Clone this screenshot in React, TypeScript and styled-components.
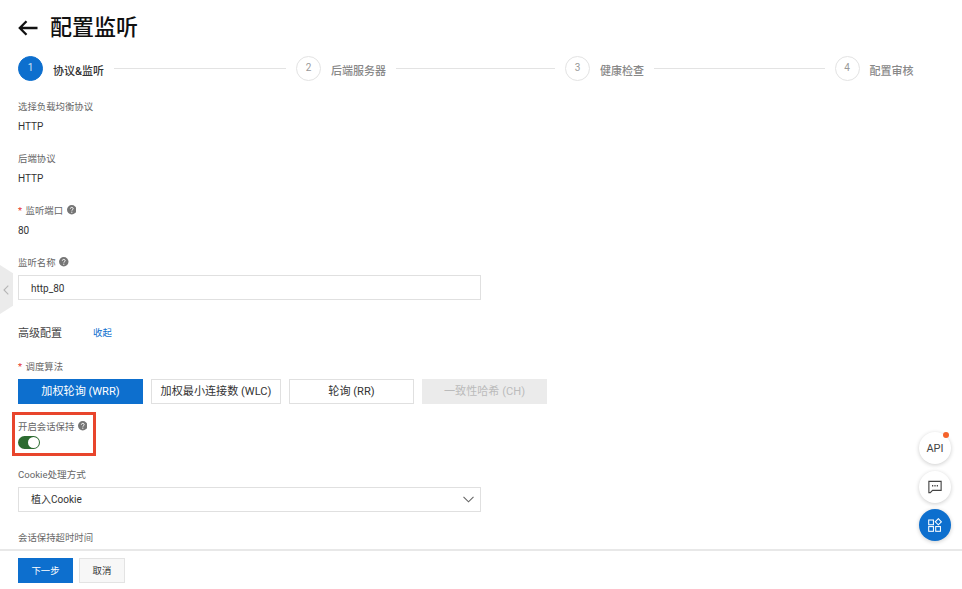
import React, { FC } from 'react';
import styled, { createGlobalStyle } from 'styled-components';

const GlobalStyle = createGlobalStyle`
  html, body {
    margin: 0;
    padding: 0;
    height: 100%;
    overflow: hidden;
    background: #fff;
  }
  body, button, input {
    font-family: Roboto, "Noto Sans CJK SC", sans-serif;
  }
`;

const HelpIcon: FC = () => (
  <HelpSvg viewBox="0 0 16 16">
    <circle cx="8" cy="8" r="8" fill="#757575" />
    <path d="M5.6 6.2C5.7 4.8 6.7 4 8 4c1.400 0 2.400.9 2.400 2.100 0 1-.6 1.500-1.300 2-.6.4-1 .8-1 1.500" fill="none" stroke="#fff" strokeWidth="1.600" />
    <circle cx="8.100" cy="12" r="1" fill="#fff" />
  </HelpSvg>
);

const steps = [
  { n: 1, label: '协议&监听' },
  { n: 2, label: '后端服务器' },
  { n: 3, label: '健康检查' },
  { n: 4, label: '配置审核' },
];

const methods = ['加权轮询 (WRR)', '加权最小连接数 (WLC)', '轮询 (RR)', '一致性哈希 (CH)'];

export default function App() {
  return (
    <Page>
      <GlobalStyle />
      <Main>
        <TitleRow>
          <svg width="20" height="16" viewBox="0 0 20 16" fill="none">
            <path d="M19.500 8H2M8.500 1.200 1.800 8l6.700 6.800" stroke="#111" strokeWidth="2.300" />
          </svg>
          <Title>配置监听</Title>
        </TitleRow>

        <Steps>
          {steps.map((s) => (
            <Step key={s.n}>
              <StepCircle $active={s.n === 1}>{s.n}</StepCircle>
              <StepLabel $active={s.n === 1}>{s.label}</StepLabel>
              {s.n < 4 && <StepLine />}
            </Step>
          ))}
        </Steps>

        <Field>
          <Label>选择负载均衡协议</Label>
          <Value>HTTP</Value>
        </Field>
        <Field>
          <Label>后端协议</Label>
          <Value>HTTP</Value>
        </Field>
        <Field>
          <Label>
            <Required>*</Required>监听端口
            <HelpIcon />
          </Label>
          <Value>80</Value>
        </Field>
        <Label>
          监听名称
          <HelpIcon />
        </Label>
        <TextBox>http_80</TextBox>

        <SectionRow>
          <SectionTitle>高级配置</SectionTitle>
          <Collapse>收起</Collapse>
        </SectionRow>

        <Label>
          <Required>*</Required>调度算法
        </Label>
        <MethodGroup>
          {methods.map((m, i) => (
            <MethodButton key={m} $selected={i === 0} $disabled={i === 3}>
              {m}
            </MethodButton>
          ))}
        </MethodGroup>

        <Highlight>
          <Label>
            开启会话保持
            <HelpIcon />
          </Label>
          <Toggle />
        </Highlight>

        <CookieLabel>Cookie处理方式</CookieLabel>
        <SelectBox>
          植入Cookie
          <svg width="11" height="7" viewBox="0 0 11 7" fill="none">
            <path d="M.5.800 5.500 5.800 10.500.800" stroke="#666" strokeWidth="1.100" />
          </svg>
        </SelectBox>

        <TimeoutLabel>会话保持超时时间</TimeoutLabel>
      </Main>

      <Footer>
        <PrimaryButton>下一步</PrimaryButton>
        <CancelButton>取消</CancelButton>
      </Footer>

      <SideHandle>
        <svg width="6" height="10" viewBox="0 0 6 10" fill="none">
          <path d="M5.300.600 1 5l4.300 4.400" stroke="#b5b5b5" strokeWidth="1.100" />
        </svg>
      </SideHandle>

      <FloatGroup>
        <FloatButton>
          API
          <Dot />
        </FloatButton>
        <FloatButton>
          <svg width="14" height="14" viewBox="0 0 16 16" fill="none">
            <path d="M1 1.500h14v10.300H5.200L2.600 14.400H1z" stroke="#444" strokeWidth="1.300" />
            <path d="M4.600 6.600h1.400M7.300 6.600h1.400M10 6.600h1.400" stroke="#444" strokeWidth="1.800" />
          </svg>
        </FloatButton>
        <FloatButton $primary>
          <svg width="14" height="14" viewBox="0 0 16 16" fill="none" stroke="#fff" strokeWidth="1.200">
            <rect x=".8" y="2.300" width="5.400" height="5.400" />
            <rect x=".8" y="9.800" width="5.400" height="5.400" />
            <rect x="8.800" y="9.800" width="5.400" height="5.400" />
            <path d="M11.800.800 15.300 4.300 11.800 7.800 8.300 4.300z" />
          </svg>
        </FloatButton>
      </FloatGroup>
    </Page>
  );
}

const Page = styled.div`
  position: relative;
  display: flex;
  flex-direction: column;
  height: 100vh;
  overflow: hidden;
  background: #fff;
  color: #333;
`;

const Main = styled.main`
  flex: 1;
  min-height: 0;
  overflow: hidden;
  padding: 0 18px;
`;

const TitleRow = styled.div`
  display: flex;
  align-items: center;
  gap: 12px;
  height: 56px;
`;

const Title = styled.h1`
  margin: 0;
  font-size: 22px;
  font-weight: 500;
  line-height: 28px;
  color: #111;
`;

const Steps = styled.div`
  display: grid;
  grid-template-columns: 278px 269px 269.500px auto;
  height: 25px;
  margin-bottom: 18px;
`;

const Step = styled.div`
  display: flex;
  align-items: flex-start;
`;

const StepCircle = styled.div<{ $active: boolean }>`
  flex: none;
  box-sizing: border-box;
  width: 25px;
  height: 25px;
  border-radius: 50%;
  border: 1px solid ${(p) => (p.$active ? '#0d6fce' : '#e3e3e3')};
  background: ${(p) => (p.$active ? '#0d6fce' : '#fff')};
  color: ${(p) => (p.$active ? '#cfe3f6' : '#999')};
  font-size: 10px;
  line-height: 21px;
  text-align: center;
`;

const StepLabel = styled.span<{ $active: boolean }>`
  flex: none;
  margin-left: 10px;
  font-size: 11px;
  font-weight: 500;
  line-height: 31px;
  color: ${(p) => (p.$active ? '#333' : '#888')};
`;

const StepLine = styled.div`
  flex: 1;
  height: 1px;
  margin: 12px 10px 0 9.500px;
  background: #e3e3e3;
`;

const Field = styled.div`
  margin-bottom: 18px;
`;

const Label = styled.div`
  display: flex;
  align-items: center;
  height: 14px;
  margin-bottom: 6px;
  font-size: 9.400px;
  color: #666;
  white-space: nowrap;
`;

const Required = styled.span`
  width: 7.600px;
  color: #e5352b;
`;

const HelpSvg = styled.svg`
  width: 9.500px;
  height: 9.500px;
  margin-left: 3.500px;
`;

const Value = styled.div`
  height: 14px;
  font-size: 10px;
  line-height: 15px;
  color: #333;
`;

const TextBox = styled.div`
  box-sizing: border-box;
  width: 463px;
  height: 25px;
  padding: 0 12px;
  border: 1px solid #e0e0e0;
  font-size: 10px;
  line-height: 25px;
  color: #333;
`;

const SectionRow = styled.div`
  display: flex;
  align-items: center;
  height: 18px;
  margin: 23px 0 18px;
`;

const SectionTitle = styled.span`
  width: 75px;
  font-size: 11px;
  color: #444;
`;

const Collapse = styled.span`
  font-size: 9.400px;
  color: #0d6fce;
`;

const MethodGroup = styled.div`
  display: grid;
  grid-template-columns: 125px 130px 125px 125px;
  gap: 8px;
  margin-bottom: 8px;
`;

const MethodButton = styled.div<{ $selected?: boolean; $disabled?: boolean }>`
  box-sizing: border-box;
  height: 25px;
  border: 1px solid
    ${(p) => (p.$selected ? '#0d6fce' : p.$disabled ? '#ebebeb' : '#e0e0e0')};
  background: ${(p) => (p.$selected ? '#0d6fce' : p.$disabled ? '#ebebeb' : '#fff')};
  color: ${(p) => (p.$selected ? '#fff' : p.$disabled ? '#bbb' : '#333')};
  font-size: 11.100px;
  line-height: 24px;
  text-align: center;
  white-space: nowrap;
`;

const Highlight = styled.div`
  box-sizing: border-box;
  width: 84px;
  height: 44px;
  margin-left: -6px;
  padding: 4px 0 0 3px;
  border: 3px solid #e8452c;

  ${Label} {
    margin-bottom: 3px;
  }
`;

const Toggle = styled.div`
  position: relative;
  width: 22px;
  height: 13px;
  border-radius: 7px;
  background: #2c6b30;

  &::after {
    content: '';
    position: absolute;
    top: 1px;
    right: 1px;
    box-sizing: border-box;
    width: 11px;
    height: 11px;
    border-radius: 50%;
    background: #fff;
  }
`;

const CookieLabel = styled(Label)`
  margin-top: 11px;
  font-size: 9.600px;
`;

const SelectBox = styled(TextBox)`
  display: flex;
  align-items: center;
  justify-content: space-between;
  padding-right: 6px;
`;

const TimeoutLabel = styled(Label)`
  margin-top: 18px;
`;

const Footer = styled.footer`
  flex: none;
  display: flex;
  gap: 6px;
  box-sizing: border-box;
  height: 40px;
  padding: 7px 18px 0;
  border-top: 2px solid #e8e8e8;
  background: #fff;
`;

const PrimaryButton = styled.div`
  box-sizing: border-box;
  width: 55px;
  height: 25px;
  background: #0d6fce;
  color: #fff;
  font-size: 9.400px;
  line-height: 25px;
  text-align: center;
`;

const CancelButton = styled(PrimaryButton)`
  width: 46px;
  border: 1px solid #e3e3e3;
  background: #f7f7f7;
  color: #333;
  line-height: 23px;
`;

const SideHandle = styled.div`
  position: absolute;
  top: 265px;
  left: 0;
  display: flex;
  align-items: center;
  width: 13px;
  height: 49px;
  padding-left: 3px;
  box-sizing: border-box;
  background: #ebebeb;
  clip-path: polygon(0 0, 100% 17%, 100% 83%, 0 100%);
`;

const FloatGroup = styled.div`
  position: absolute;
  right: 11px;
  bottom: 48px;
  display: flex;
  flex-direction: column;
  gap: 6.500px;
`;

const FloatButton = styled.div<{ $primary?: boolean }>`
  position: relative;
  display: flex;
  align-items: center;
  justify-content: center;
  width: 32px;
  height: 32px;
  border-radius: 50%;
  background: ${(p) => (p.$primary ? '#0d6fce' : '#fff')};
  box-shadow: 0 1px 4px rgba(0, 0, 0, 0.2);
  color: #444;
  font-size: 11px;
`;

const Dot = styled.span`
  position: absolute;
  top: 0;
  right: 2px;
  width: 6px;
  height: 6px;
  border-radius: 50%;
  background: #f5622a;
`;
